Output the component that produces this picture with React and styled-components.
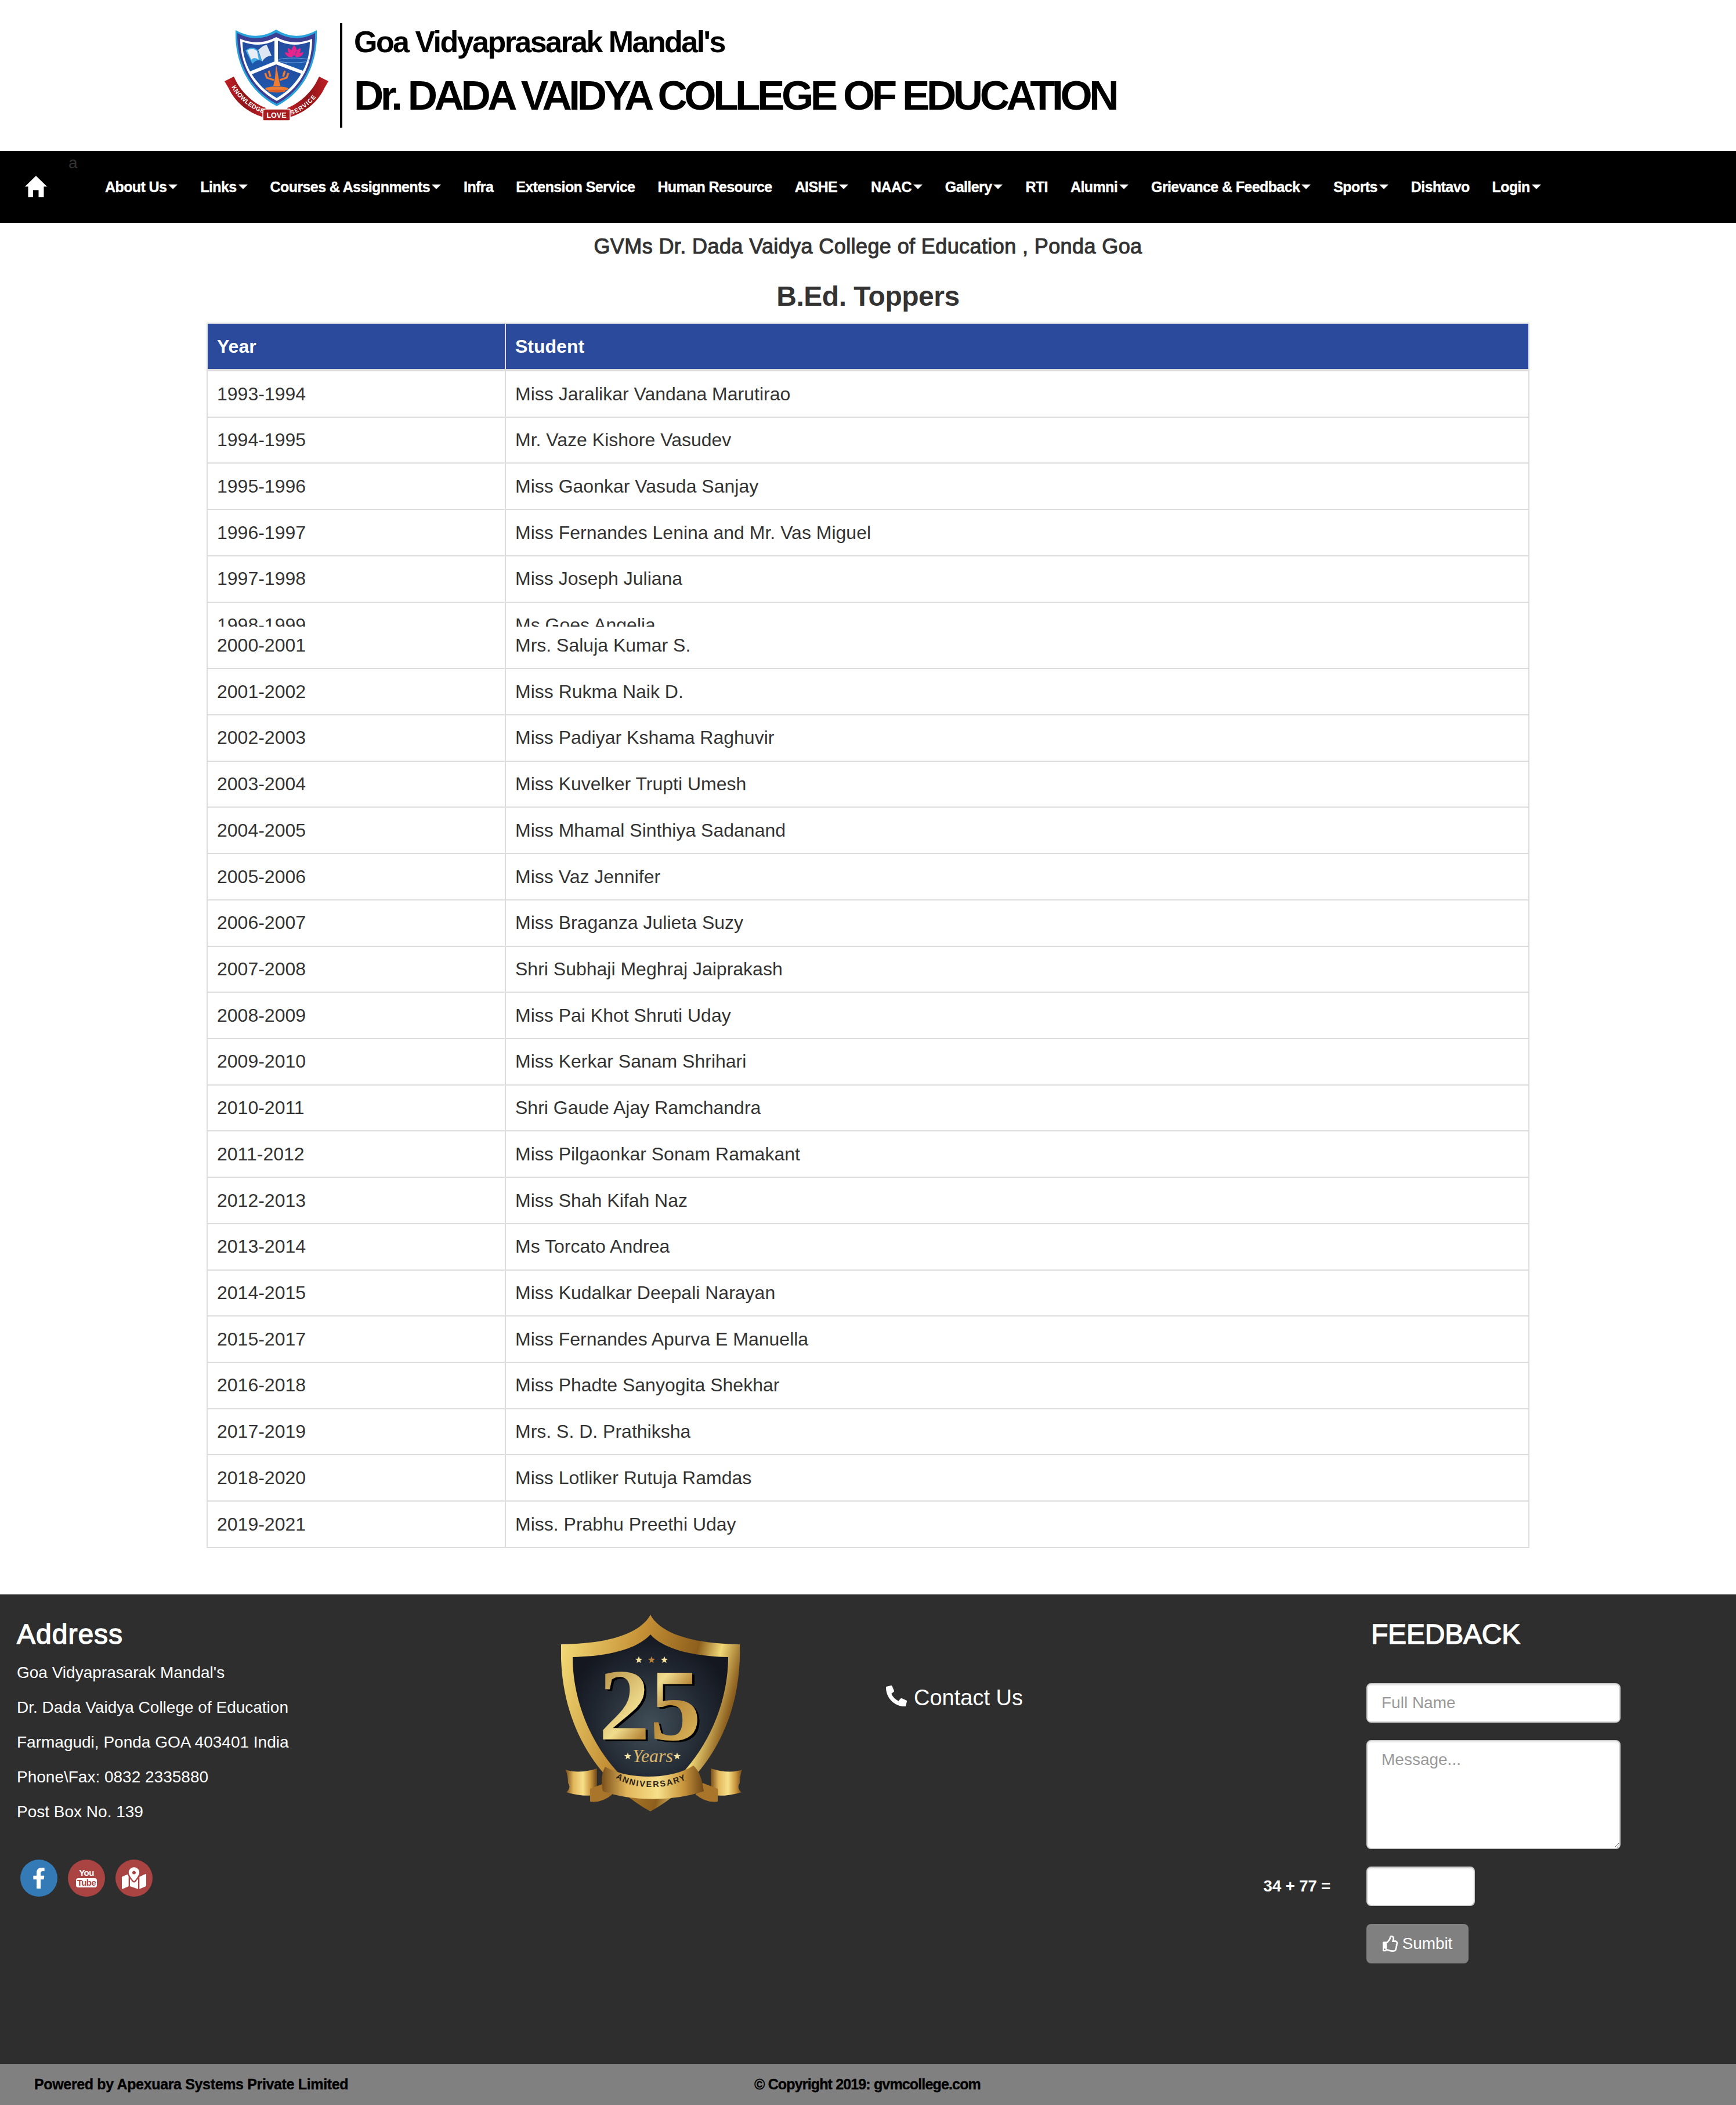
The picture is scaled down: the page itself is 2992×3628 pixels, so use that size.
import React from 'react'
import styled, { createGlobalStyle } from 'styled-components'
import { FaFacebookF, FaMapMarkedAlt, FaPhoneAlt, FaRegThumbsUp } from 'react-icons/fa'

const Global = createGlobalStyle`
  html, body { margin: 0; padding: 0; background: #fff; }
  body { font-family: "Liberation Sans", Arial, sans-serif; color: #333; }
  * { box-sizing: border-box; }
`

const menu = [
  ['About Us', true], ['Links', true], ['Courses & Assignments', true], ['Infra'], ['Extension Service'],
  ['Human Resource'], ['AISHE', true], ['NAAC', true], ['Gallery', true], ['RTI'], ['Alumni', true],
  ['Grievance & Feedback', true], ['Sports', true], ['Dishtavo'], ['Login', true],
]

const toppers = [
  ['1993-1994', 'Miss Jaralikar Vandana Marutirao'],
  ['1994-1995', 'Mr. Vaze Kishore Vasudev'],
  ['1995-1996', 'Miss Gaonkar Vasuda Sanjay'],
  ['1996-1997', 'Miss Fernandes Lenina and Mr. Vas Miguel'],
  ['1997-1998', 'Miss Joseph Juliana'],
  ['1998-1999', 'Ms Goes Angelia', 'top'],
  ['2000-2001', 'Mrs. Saluja Kumar S.', 'bottom'],
  ['2001-2002', 'Miss Rukma Naik D.'],
  ['2002-2003', 'Miss Padiyar Kshama Raghuvir'],
  ['2003-2004', 'Miss Kuvelker Trupti Umesh'],
  ['2004-2005', 'Miss Mhamal Sinthiya Sadanand'],
  ['2005-2006', 'Miss Vaz Jennifer'],
  ['2006-2007', 'Miss Braganza Julieta Suzy'],
  ['2007-2008', 'Shri Subhaji Meghraj Jaiprakash'],
  ['2008-2009', 'Miss Pai Khot Shruti Uday'],
  ['2009-2010', 'Miss Kerkar Sanam Shrihari'],
  ['2010-2011', 'Shri Gaude Ajay Ramchandra'],
  ['2011-2012', 'Miss Pilgaonkar Sonam Ramakant'],
  ['2012-2013', 'Miss Shah Kifah Naz'],
  ['2013-2014', 'Ms Torcato Andrea'],
  ['2014-2015', 'Miss Kudalkar Deepali Narayan'],
  ['2015-2017', 'Miss Fernandes Apurva E Manuella'],
  ['2016-2018', 'Miss Phadte Sanyogita Shekhar'],
  ['2017-2019', 'Mrs. S. D. Prathiksha'],
  ['2018-2020', 'Miss Lotliker Rutuja Ramdas'],
  ['2019-2021', 'Miss. Prabhu Preethi Uday'],
]

const address = [
  "Goa Vidyaprasarak Mandal's",
  'Dr. Dada Vaidya College of Education',
  'Farmagudi, Ponda GOA 403401 India',
  'Phone\\Fax: 0832 2335880',
  'Post Box No. 139',
]

const Masthead = styled.header`
  height: 260px;
  padding: 40px 0 0 386px;
  display: flex;
  align-items: flex-start;
`
const Crest = styled.svg`
  width: 181px;
  height: 160px;
  margin-top: 10px;
  flex: none;
`
const Names = styled.div`
  height: 180px;
  margin-left: 19px;
  padding-left: 20px;
  border-left: 4px solid #000;
  color: #000;
  font-weight: 700;
  white-space: nowrap;
`
const Society = styled.div`
  font-size: 52px;
  line-height: 60px;
  letter-spacing: -2.55px;
  margin-top: 2px;
`
const College = styled.div`
  font-size: 71px;
  line-height: 80px;
  letter-spacing: -5.42px;
  margin-top: 23px;
`

const Nav = styled.nav`
  height: 124px;
  background: #000;
  display: flex;
  align-items: center;
  padding-left: 43px;
`
const Home = styled.svg`
  width: 38px;
  height: 37px;
  fill: #fff;
  margin-top: -2px;
  flex: none;
`
const Stray = styled.span`
  align-self: flex-start;
  margin: 5px 51px 0 37px;
  font-size: 28px;
  line-height: 32px;
  width: 12px;
  color: #333;
`
const MenuItem = styled.a`
  display: flex;
  align-items: center;
  margin-right: 39px;
  color: #fff;
  font-size: 25px;
  font-weight: 700;
  letter-spacing: -0.6px;
  -webkit-text-stroke: 0.4px #fff;
  white-space: nowrap;
`
const Caret = styled.i`
  width: 0;
  height: 0;
  margin-left: 3px;
  border-top: 8px solid #fff;
  border-left: 8px solid transparent;
  border-right: 8px solid transparent;
`

const Main = styled.main`
  padding: 0 356px 80px;
`
const Subtitle = styled.h2`
  margin: 0;
  padding-top: 20px;
  height: 84px;
  font-size: 36px;
  line-height: 41px;
  font-weight: 400;
  text-align: center;
  -webkit-text-stroke: 1.1px #333;
  letter-spacing: 0.4px;
`
const Heading = styled.h1`
  margin: 0;
  height: 88px;
  padding-top: 16px;
  font-size: 48px;
  line-height: 54px;
  font-weight: 700;
  letter-spacing: -0.5px;
  text-align: center;
`
const Table = styled.div`
  border: solid #ddd;
  border-width: 2px;
  border-bottom: 0;
  font-size: 32px;
`
const HeadRow = styled.div`
  display: grid;
  grid-template-columns: 514px 1fr;
  height: 82px;
  border-bottom: 4px solid #ddd;
  background: #2b4a9b;
  color: #fff;
  font-weight: 700;
`
const HeadCell = styled.div`
  display: flex;
  align-items: center;
  padding-left: 16px;
  border-right: ${p => (p.$last ? 0 : '2px solid #ddd')};
`
/* the reference capture has a seam: one row is cut off half way and the next starts under it */
const Row = styled.div`
  display: grid;
  grid-template-columns: 514px 1fr;
  height: ${p => (p.$part === 'top' ? '41.6px' : p.$part === 'bottom' ? '73px' : '79.72px')};
  overflow: hidden;
  border-bottom: ${p => (p.$part === 'top' ? 0 : '2px solid #ddd')};
`
const Cell = styled.div`
  display: flex;
  align-items: center;
  height: 78px;
  margin-top: ${p => (p.$part === 'bottom' ? '-7px' : 0)};
  padding-left: 16px;
  color: #333;
  border-right: ${p => (p.$last ? 0 : '2px solid #ddd')};
`

const Footer = styled.footer`
  height: 809px;
  background: #2e2e2e;
  color: #fff;
  display: grid;
  grid-template-columns: 748px 748px 654px 842px;
`
const FootTitle = styled.h3`
  margin: 0;
  font-size: 48px;
  line-height: 54px;
  font-weight: 400;
  letter-spacing: 1px;
  -webkit-text-stroke: 1.4px #fff;
`
const AddressCol = styled.div`
  padding: 42px 0 0 29px;
`
const AddressLine = styled.p`
  margin: 0;
  height: 60px;
  font-size: 28px;
  line-height: 60px;
`
const Lines = styled.div`
  margin-top: 9px;
`
const Socials = styled.div`
  display: flex;
  gap: 18px;
  margin: 52px 0 0 6px;
`
const Social = styled.a`
  width: 64px;
  height: 64px;
  border-radius: 50%;
  background: ${p => p.$bg};
  color: #fff;
  font-size: ${p => p.$size || 36}px;
  display: flex;
  align-items: center;
  justify-content: center;
`
const YouTube = styled.span`
  display: flex;
  flex-direction: column;
  align-items: center;
  font-size: 15px;
  line-height: 16px;
  font-weight: 700;
  color: #fff;
  letter-spacing: -0.6px;
`
const Tube = styled.span`
  background: #fff;
  color: #a94442;
  border-radius: 4px;
  padding: 0 2px;
  margin-top: 1px;
`
const EmblemCol = styled.div`
  padding: 35px 0 0 219px;
`
const Emblem = styled.svg`
  display: block;
  width: 320px;
  height: 339px;
`
const ContactCol = styled.div`
  padding: 156px 0 0 31px;
`
const Contact = styled.div`
  display: flex;
  align-items: center;
  gap: 12px;
  font-size: 38px;
  line-height: 44px;
  svg { font-size: 36px; margin-top: -6px; }
`
const Form = styled.form`
  display: grid;
  grid-template-columns: 205px 438px;
  align-content: start;
  row-gap: 30.5px;
  padding-top: 42px;
`
const FormTitle = styled(FootTitle)`
  grid-column: 2;
  margin: 0 0 26.5px 8px;
  letter-spacing: -0.2px;
`
const fieldCss = `
  display: block;
  border: 2px solid #ccc;
  border-radius: 8px;
  background: #fff;
  font: 28px "Liberation Sans", Arial, sans-serif;
  color: #555;
  padding: 0 24px;
  box-shadow: inset 0 2px 2px rgba(0, 0, 0, 0.075);
  outline: 0;
  &::placeholder { color: #999; opacity: 1; }
`
const Input = styled.input`
  ${fieldCss}
  grid-column: 2;
  height: 68px;
  width: ${p => p.$w || 438}px;
`
const Message = styled.textarea`
  ${fieldCss}
  grid-column: 2;
  width: 438px;
  height: 187.5px;
  padding-top: 12px;
  line-height: 40px;
  resize: vertical;
`
const Sum = styled.label`
  grid-column: 1;
  justify-self: end;
  align-self: center;
  padding-right: 62px;
  font-size: 28px;
  font-weight: 700;
  letter-spacing: -0.3px;
`
const Submit = styled.button`
  grid-column: 2;
  width: 176px;
  height: 68px;
  border: 0;
  border-radius: 8px;
  background: #808080;
  color: #fff;
  font: 28px "Liberation Sans", Arial, sans-serif;
  letter-spacing: -0.1px;
  display: flex;
  align-items: center;
  justify-content: center;
  gap: 6px;
  padding: 0;
`
const BottomBar = styled.div`
  height: 71px;
  background: #808080;
  color: #000;
  display: flex;
  align-items: center;
  font-size: 25px;
  font-weight: 700;
  letter-spacing: -0.85px;
  -webkit-text-stroke: 0.4px #000;
  white-space: nowrap;
`
const Powered = styled.span`
  width: 1300px;
  padding-left: 59px;
  letter-spacing: -0.35px;
`

const Star = ({ x, y, r = 6, fill = '#f4e3a1' }) => {
  const pts = []
  for (let i = 0; i < 10; i++) {
    const rad = i % 2 ? r * 0.42 : r
    const a = -Math.PI / 2 + (i * Math.PI) / 5
    pts.push(`${(x + rad * Math.cos(a)).toFixed(1)},${(y + rad * Math.sin(a)).toFixed(1)}`)
  }
  return <polygon points={pts.join(' ')} fill={fill} />
}

const CollegeCrest = () => (
  <Crest viewBox="0 0 181 160">
    <defs>
      <linearGradient id="field" x1="0" y1="0" x2="0" y2="1">
        <stop offset="0" stopColor="#274a9e" />
        <stop offset="1" stopColor="#1a5cb0" />
      </linearGradient>
      <linearGradient id="sash" x1="0" y1="0" x2="1" y2="0">
        <stop offset="0" stopColor="#c02026" />
        <stop offset="0.5" stopColor="#8e1418" />
        <stop offset="1" stopColor="#c02026" />
      </linearGradient>
      <path id="sashLeft" d="M13 100 C 23 118 42 136 70 146" />
      <path id="sashRight" d="M116 148 C 140 140 158 122 171 100" />
    </defs>
    <path d="M20 2 Q 56 22 90 1 Q 124 22 160 2 C 162 50 145 105 91 133 C 37 105 18 50 20 2Z" fill="#29a3dc" />
    <path d="M23 7 Q 56 25 90 6 Q 124 25 157 7 C 158 50 142 102 91 129 C 40 102 22 50 23 7Z" fill="#3d3f93" />
    <path d="M28 17 Q 60 30 90 14 Q 120 30 152 17 C 152 55 138 98 91 124 C 44 98 28 55 28 17Z" fill="#fff" />
    <path d="M32 22 Q 62 33 87 20 L 87 56 L 45 73 C 36 56 32 40 32 22Z" fill="url(#field)" />
    <path d="M93 20 Q 118 33 148 22 C 148 40 144 58 136 72 L 93 56Z" fill="url(#field)" />
    <path d="M90 61 L 133 77 C 123 94 110 108 91 119 C 72 108 58 94 48 78Z" fill="url(#field)" />
    <path d="M37 37 Q 48 28 58 36 L 66 56 Q 58 50 49 60Z" fill="#3fa9e0" />
    <path d="M40 37 Q 48 31 57 38 L 60 53 Q 52 47 47 53Z" fill="#e8edf6" />
    <path d="M59 36 Q 70 26 74 28 L 82 46 Q 72 46 66 56Z" fill="#dfe6f3" />
    <path d="M121 28 C 126 34 128 38 121 46 C 114 38 116 34 121 28Z M110 33 C 116 34 119 40 120 47 C 113 46 109 40 110 33Z M132 33 C 126 34 123 40 122 47 C 129 46 133 40 132 33Z M105 40 C 110 40 116 44 119 48 C 112 50 106 46 105 40Z M137 40 C 132 40 126 44 123 48 C 130 50 136 46 137 40Z" fill="#e6258c" />
    <ellipse cx="120" cy="54" rx="27" ry="4" fill="none" stroke="#7fb3e6" strokeWidth="0.8" />
    <path d="M90 62 L 92 72 L 94 84 L 97 98 H 85 L 88 84 L 89 72Z" fill="#ee7b30" />
    <path d="M71 76 L 74 84 L 86 88 M111 76 L 108 84 L 96 88 M77 72 L 80 82 M105 72 L 102 82" stroke="#ee7b30" strokeWidth="3.4" fill="none" />
    <ellipse cx="91" cy="103" rx="20" ry="4" fill="#ee7b30" />
    <ellipse cx="91" cy="107" rx="15" ry="2.5" fill="#d9602a" />
    <path d="M1 90 L 17 82 L 21 90 C 30 108 50 128 72 136 L 68 152 C 40 144 18 124 8 102Z" fill="url(#sash)" />
    <path d="M180 90 L 164 82 L 160 90 C 151 108 131 128 109 136 L 113 152 C 141 144 163 124 173 102Z" fill="url(#sash)" />
    <rect x="67" y="138" width="47" height="20" rx="2" fill="#a81b20" stroke="#fff" strokeWidth="1.5" />
    <text fontFamily="Liberation Sans" fontSize="10.5" fontWeight="700" fill="#fff" letterSpacing="0.4">
      <textPath href="#sashLeft">KNOWLEDGE</textPath>
    </text>
    <text fontFamily="Liberation Sans" fontSize="10.5" fontWeight="700" fill="#fff" letterSpacing="1.2">
      <textPath href="#sashRight">SERVICE</textPath>
    </text>
    <text x="90.5" y="153" textAnchor="middle" fontFamily="Liberation Sans" fontSize="12.5" fontWeight="700" fill="#fff">LOVE</text>
  </Crest>
)

const AnniversaryBadge = () => (
  <Emblem viewBox="0 0 320 339">
    <defs>
      <linearGradient id="rim" x1="0" y1="0" x2="1" y2="0.3">
        <stop offset="0" stopColor="#f7e27e" />
        <stop offset="0.45" stopColor="#c48f35" />
        <stop offset="0.75" stopColor="#8d5f1c" />
        <stop offset="0.87" stopColor="#f1d878" />
        <stop offset="1" stopColor="#8a5d1d" />
      </linearGradient>
      <linearGradient id="numeral" x1="0" y1="0" x2="1" y2="1">
        <stop offset="0" stopColor="#a67a30" />
        <stop offset="0.45" stopColor="#f0dc8e" />
        <stop offset="0.6" stopColor="#b98a3c" />
        <stop offset="1" stopColor="#e7c565" />
      </linearGradient>
      <linearGradient id="band" x1="0" y1="0" x2="1" y2="0">
        <stop offset="0" stopColor="#7a4f1a" />
        <stop offset="0.25" stopColor="#e2b75c" />
        <stop offset="0.55" stopColor="#f7e08a" />
        <stop offset="0.8" stopColor="#c8953c" />
        <stop offset="1" stopColor="#6f4616" />
      </linearGradient>
      <radialGradient id="night" cx="0.5" cy="0.55" r="0.55">
        <stop offset="0" stopColor="#414f58" />
        <stop offset="0.6" stopColor="#232a34" />
        <stop offset="1" stopColor="#141720" />
      </radialGradient>
      <filter id="shade" x="-10%" y="-10%" width="120%" height="120%">
        <feDropShadow dx="4" dy="3" stdDeviation="0" floodColor="#000" />
      </filter>
      <path id="arc" d="M94 281 C 125 304 190 302 226 278" />
    </defs>
    <path d="M154 0 C 170 30 220 50 308 51 C 312 170 260 280 154 339 C 48 280 -4 170 0 51 C 88 50 138 30 154 0Z" fill="url(#rim)" />
    <path d="M154 34 C 175 58 225 72 288 73 C 288 170 235 270 154 317 C 73 270 20 170 20 73 C 83 72 133 58 154 34Z" fill="url(#night)" />
    <Star x={134} y={78} r={6.5} />
    <Star x={156} y={78} r={6.5} fill="#b5813a" />
    <Star x={178} y={78} r={6.5} />
    <text x="153" y="215" textAnchor="middle" fontFamily="Liberation Serif" fontWeight="700" fontSize="176" fill="url(#numeral)" filter="url(#shade)">25</text>
    <Star x={115} y={244} r={6.5} />
    <Star x={200} y={244} r={6.5} />
    <text x="158" y="254" textAnchor="middle" fontFamily="Liberation Serif" fontStyle="italic" fontSize="32" fill="#dcb76b">Years</text>
    <path d="M8 267 Q 30 275 62 265 L 62 310 Q 40 315 9 306 Q 18 298 12 290 Q 12 278 8 267Z" fill="url(#band)" />
    <path d="M312 267 Q 290 275 258 265 L 258 310 Q 280 315 311 306 Q 302 298 308 290 Q 308 278 312 267Z" fill="url(#band)" />
    <path d="M50 300 L 76 290 L 88 310 Q 70 325 50 322Z" fill="#a8752a" />
    <path d="M270 300 L 244 290 L 232 310 Q 250 325 270 322Z" fill="#a8752a" />
    <path d="M76 262 C 115 285 190 285 228 260 C 240 270 244 290 246 304 C 195 322 120 322 72 304 C 68 290 70 272 76 262Z" fill="url(#band)" />
    <text fontFamily="Liberation Sans" fontWeight="700" fontSize="14.5" letterSpacing="2.1" fill="#2a2118">
      <textPath href="#arc">ANNIVERSARY</textPath>
    </text>
  </Emblem>
)

export default function App() {
  return (
    <>
      <Global />
      <Masthead>
        <CollegeCrest />
        <Names>
          <Society>Goa Vidyaprasarak Mandal's</Society>
          <College>Dr. DADA VAIDYA COLLEGE OF EDUCATION</College>
        </Names>
      </Masthead>

      <Nav>
        <Home viewBox="0 0 38 37">
          <path d="M19 0 L38 18.5 H32.5 V37 H23.5 V25 H14 V37 H5.5 V18.5 H0Z" />
        </Home>
        <Stray>a</Stray>
        {menu.map(([label, drop]) => (
          <MenuItem key={label}>
            {label}
            {drop && <Caret />}
          </MenuItem>
        ))}
      </Nav>

      <Main>
        <Subtitle>GVMs Dr. Dada Vaidya College of Education , Ponda Goa</Subtitle>
        <Heading>B.Ed. Toppers</Heading>
        <Table>
          <HeadRow>
            <HeadCell>Year</HeadCell>
            <HeadCell $last>Student</HeadCell>
          </HeadRow>
          {toppers.map(([year, student, part]) => (
            <Row key={year} $part={part}>
              <Cell $part={part}>{year}</Cell>
              <Cell $part={part} $last>{student}</Cell>
            </Row>
          ))}
        </Table>
      </Main>

      <Footer>
        <AddressCol>
          <FootTitle>Address</FootTitle>
          <Lines>
            {address.map(line => <AddressLine key={line}>{line}</AddressLine>)}
          </Lines>
          <Socials>
            <Social $bg="#337ab7"><FaFacebookF /></Social>
            <Social $bg="#a94442">
              <YouTube>You<Tube>Tube</Tube></YouTube>
            </Social>
            <Social $bg="#a94442" $size={42}><FaMapMarkedAlt /></Social>
          </Socials>
        </AddressCol>
        <EmblemCol>
          <AnniversaryBadge />
        </EmblemCol>
        <ContactCol>
          <Contact><FaPhoneAlt />Contact Us</Contact>
        </ContactCol>
        <Form>
          <FormTitle>FEEDBACK</FormTitle>
          <Input placeholder="Full Name" />
          <Message placeholder="Message..." />
          <Sum>34 + 77 =</Sum>
          <Input $w={187} />
          <Submit type="button"><FaRegThumbsUp />Sumbit</Submit>
        </Form>
      </Footer>

      <BottomBar>
        <Powered>Powered by Apexuara Systems Private Limited</Powered>
        <span>© Copyright 2019: gvmcollege.com</span>
      </BottomBar>
    </>
  )
}
